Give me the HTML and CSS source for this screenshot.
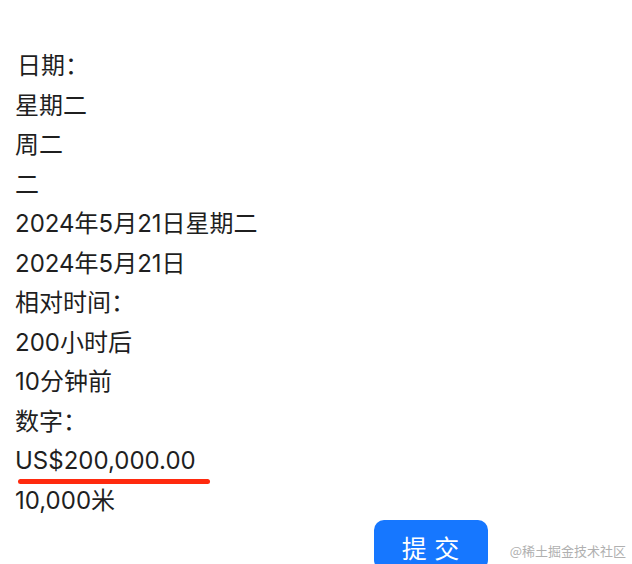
FILE: index.html
```html
<!DOCTYPE html>
<html lang="zh">
<head>
<meta charset="utf-8">
<link rel="stylesheet" href="styles.css">
</head>
<body>
<div class="page">
  <div class="line ind">日期：</div>
  <div class="line">星期二</div>
  <div class="line">周二</div>
  <div class="line">二</div>
  <div class="line">2024年5月21日星期二</div>
  <div class="line">2024年5月21日</div>
  <div class="line">相对时间：</div>
  <div class="line">200小时后</div>
  <div class="line">10分钟前</div>
  <div class="line">数字：</div>
  <div class="line money">US$200,000.00</div>
  <div class="line">10,000米</div>
  <div class="actions">
    <button class="btn">提 交</button>
  </div>
</div>
<div class="watermark">@稀土掘金技术社区</div>
</body>
</html>
```
FILE: styles.css
```css
html, body { margin: 0; padding: 0; background: #fff; }
body {
  font-family: "Inter", "Noto Sans CJK SC", sans-serif;
  color: #1f1f1f;
  overflow: hidden;
  height: 564px;
}
.page {
  padding: 46px 0 0 15px;
}
.line {
  font-size: 24px;
  line-height: 39.5px;
  height: 39.5px;
  white-space: nowrap;
}
.ind { padding-left: 2px; }
.money {
  position: relative;
}
.money::after {
  content: "";
  position: absolute;
  left: 3px;
  top: 38px;
  width: 192px;
  height: 5px;
  border-radius: 3px;
  background: #ff2a0e;
}
.actions {
  padding-left: 359px;
  padding-top: 0;
}
.btn {
  width: 114px;
  height: 50px;
  border: none;
  border-radius: 10px;
  background: #1677ff;
  color: #fff;
  font-family: "Noto Sans CJK SC", sans-serif;
  font-size: 25px;
  padding: 4px 0 0 0;
  letter-spacing: 1px;
}
.watermark {
  position: absolute;
  right: 6px;
  top: 541px;
  font-family: "Noto Sans CJK SC", sans-serif;
  font-size: 13px;
  color: #b0b0b0;
  line-height: 20px;
}
```
